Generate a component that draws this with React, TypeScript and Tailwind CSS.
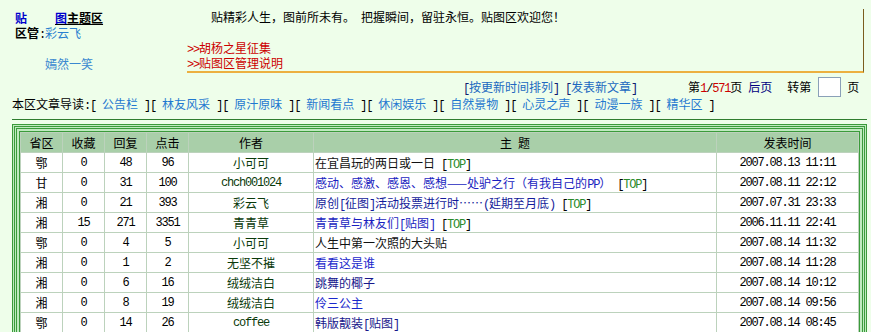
import React from "react";

const mono = "font-['Liberation_Mono',monospace] text-[12px] tracking-[-1.2px] leading-none";

function A({ children, className = "" }: { children: React.ReactNode; className?: string }) {
  return <span className={`${mono} ${className}`}>{children}</span>;
}

const NB = "\u00a0";

function Top({ sp = 1 }: { sp?: number }) {
  return (
    <>
      <A>{NB.repeat(sp)}[</A>
      <A className="text-[#2a8a2a]">TOP</A>
      <A>]</A>
    </>
  );
}

type Row = {
  p: string;
  c: string;
  r: string;
  h: string;
  a: React.ReactNode;
  t: React.ReactNode;
  d: string;
};

const rows: Row[] = [
  {
    p: "鄂", c: "0", r: "48", h: "96", a: "小可可",
    t: (<><span className="text-[#111111]">在宜昌玩的两日或一日</span><Top /></>),
    d: "2007.08.13 11:11",
  },
  {
    p: "甘", c: "0", r: "31", h: "100", a: <A>chch001024</A>,
    t: (<><span className="text-[#1a1ec0]">感动、感激、感恩、感想——处驴之行（有我自己的<A>PP</A>）</span><Top /></>),
    d: "2007.08.11 22:12",
  },
  {
    p: "湘", c: "0", r: "21", h: "393", a: "彩云飞",
    t: (<><span className="text-[#141c9a]">原创<A>[</A>征图<A>]</A>活动投票进行时……<A>(</A>延期至月底<A>)</A></span><Top /></>),
    d: "2007.07.31 23:33",
  },
  {
    p: "湘", c: "15", r: "271", h: "3351", a: "青青草",
    t: (<><span className="text-[#1a1ec0]">青青草与林友们<A>[</A>贴图<A>]</A></span><Top /></>),
    d: "2006.11.11 22:41",
  },
  {
    p: "鄂", c: "0", r: "4", h: "5", a: "小可可",
    t: <span className="text-[#111111]">人生中第一次照的大头贴</span>,
    d: "2007.08.14 11:32",
  },
  {
    p: "湘", c: "0", r: "1", h: "2", a: "无坚不摧",
    t: <span className="text-[#1a28cc]">看看这是谁</span>,
    d: "2007.08.14 11:28",
  },
  {
    p: "湘", c: "0", r: "6", h: "16", a: "绒绒洁白",
    t: <span className="text-[#18188c]">跳舞的椰子</span>,
    d: "2007.08.14 10:12",
  },
  {
    p: "湘", c: "0", r: "8", h: "19", a: "绒绒洁白",
    t: <span className="text-[#1a28cc]">伶三公主</span>,
    d: "2007.08.14 09:56",
  },
  {
    p: "鄂", c: "0", r: "14", h: "26", a: <A>coffee</A>,
    t: (<span className="text-[#18188c]">韩版靓装<A>[</A>贴图<A>]</A></span>),
    d: "2007.08.14 08:45",
  },
  {
    p: "湘", c: "0", r: "3", h: "12", a: "彩云飞",
    t: <span className="text-[#1a28cc]">美丽的风景</span>,
    d: "2007.08.14 08:10",
  },
];

const headCell = "bg-[#a9cfa9] h-[19px] flex items-center justify-center text-black";
const cell = "bg-white h-[19px] flex items-center justify-center";

const navItems = ["公告栏", "林友风采", "原汁原味", "新闻看点", "休闲娱乐", "自然景物", "心灵之声", "动漫一族", "精华区"];

export default function App() {
  return (
    <div className="w-[871px] h-[332px] overflow-hidden bg-[#eefeea] text-[12px] text-black font-['Noto_Sans_CJK_SC',sans-serif]">
      {/* top */}
      <div className="flex pt-[9px]">
        <div className="w-[187px] shrink-0 pl-[15px] pt-[1px] leading-[15px]">
          <div className="h-[15px] font-bold whitespace-nowrap">
            <span className="text-[#0000cc]">贴</span>
            <span className="ml-[28px] underline">
              <span className="text-[#0000cc]">图</span>主题区
            </span>
          </div>
          <div className="h-[15px] whitespace-nowrap">
            <b>区管</b>
            <A>:</A>
            <span className="text-[#2a7fd0]">彩云飞</span>
          </div>
          <div className="h-[15px] ml-[30px] mt-[16px] text-[#3a88d0]">嫣然一笑</div>
        </div>
        <div className="w-[677px] h-[64px] shrink-0 border-r border-r-[#7a5c1e] border-b-2 border-b-[#ecb040] leading-[15px]">
          <div className="h-[15px] pl-[24px] whitespace-nowrap">
            贴精彩人生，图前所未有。<A>{NB}</A>把握瞬间，留驻永恒。贴图区欢迎您！
          </div>
          <div className="h-[15px] mt-[16px] text-[#cc0000] whitespace-nowrap">
            <A>&gt;&gt;</A>胡杨之星征集
          </div>
          <div className="h-[15px] text-[#cc0000] whitespace-nowrap">
            <A>&gt;&gt;</A>贴图区管理说明
          </div>
        </div>
      </div>

      {/* row 2 */}
      <div className="flex items-center h-[20px] mt-[4px] leading-[14px]">
        <span className="ml-[463px] whitespace-nowrap">
          <A className="text-[#102070]">[</A>
          <span className="text-[#2068c0]">按更新时间排列</span>
          <A className="text-[#102070]">]{NB}[</A>
          <span className="text-[#2068c0]">发表新文章</span>
          <A className="text-[#102070]">]</A>
        </span>
        <span className="ml-[51px] whitespace-nowrap">
          第<A className="text-[#cc0000]">1</A>
          <A>/</A>
          <A className="text-[#cc0000]">571</A>页
        </span>
        <span className="ml-[6px] text-[#000080]">后页</span>
        <span className="ml-[15px]">转第</span>
        <input
          className="ml-[7px] w-[23px] h-[20px] border border-[#8aa0b8] bg-white outline-none"
          aria-label="页码"
        />
        <span className="ml-[6px]">页</span>
      </div>

      {/* nav */}
      <div className="h-[14px] pl-[12px] leading-[14px] whitespace-nowrap">
        本区文章导读<A>:</A>
        {navItems.map((n, i) => (
          <React.Fragment key={n}>
            <A>{i === 0 ? "[" + NB : "][" + NB}</A>
            <span className="text-[#1f78d0]">{n}</span>
            <A>{NB}</A>
          </React.Fragment>
        ))}
        <A>]</A>
      </div>

      {/* separator */}
      <div className="ml-[12px] w-[855px] h-px mt-[8px] bg-[#2f7d2f]" />

      {/* table */}
      <div className="ml-[12px] w-[855px] mt-[4px] border border-[#3b9b3b] bg-[#bfeabf] p-px">
        <div className="border border-[#3b9b3b] p-px">
          <div className="border border-[#3b9b3b] p-[2px]">
            <div className="border border-[#3b9b3b]">
              <div className="grid grid-cols-[41px_41px_41px_41px_124px_402px_141px] gap-px bg-[#bcd2bc] p-px leading-[14px]">
                <div className={headCell}>省区</div>
                <div className={headCell}>收藏</div>
                <div className={headCell}>回复</div>
                <div className={headCell}>点击</div>
                <div className={headCell}>作者</div>
                <div className={headCell}>
                  主<A>{NB}</A>题
                </div>
                <div className={headCell}>发表时间</div>
                {rows.map((r, i) => (
                  <React.Fragment key={i}>
                    <div className={cell}>{r.p}</div>
                    <div className={cell}><A>{r.c}</A></div>
                    <div className={cell}><A>{r.r}</A></div>
                    <div className={cell}><A>{r.h}</A></div>
                    <div className={`${cell} text-[#0a3a0a]`}>{r.a}</div>
                    <div className="bg-white h-[19px] leading-[19px] pl-px whitespace-nowrap">{r.t}</div>
                    <div className={cell}><A>{r.d}</A></div>
                  </React.Fragment>
                ))}
              </div>
            </div>
          </div>
        </div>
      </div>
    </div>
  );
}
